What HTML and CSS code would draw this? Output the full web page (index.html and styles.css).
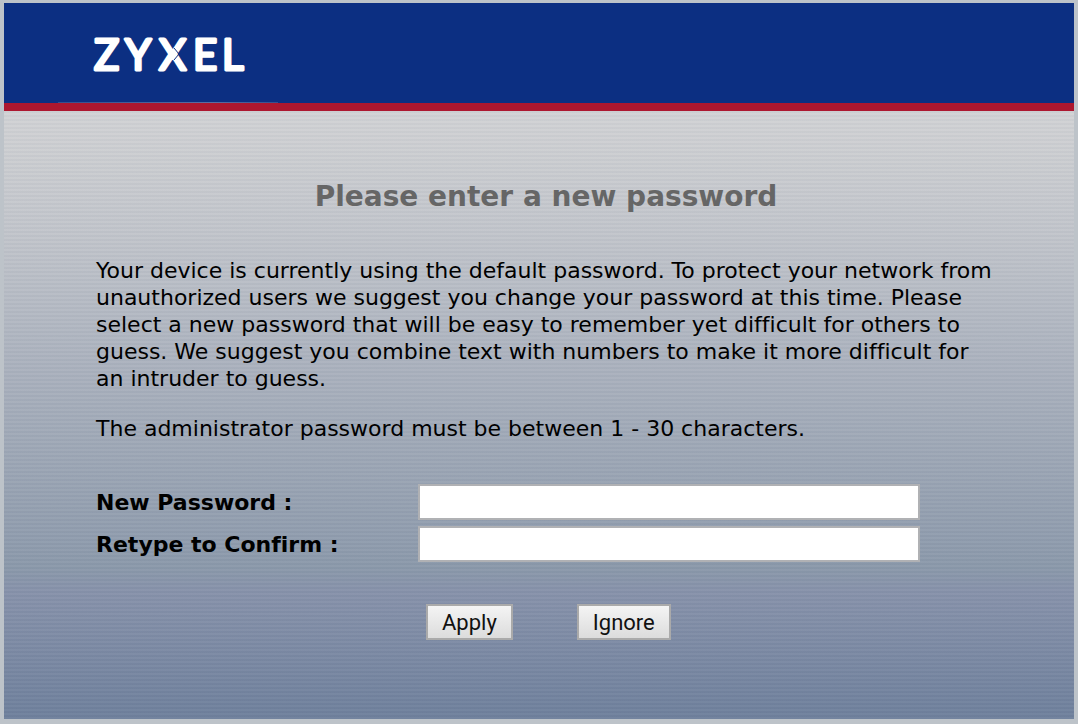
FILE: index.html
```html
<!DOCTYPE html>
<html lang="en">
<head>
<meta charset="utf-8">
<meta name="viewport" content="width=device-width, initial-scale=1">
<title>ZYXEL - New password</title>
<link rel="stylesheet" href="styles.css">
</head>
<body>
<div class="panel">
  <header class="banner">
    <svg class="logo" width="200" height="64" viewBox="0 0 200 64" role="img" aria-label="ZYXEL">
      <text class="logo-text" x="2 33 67 101 130" y="47">ZYXEL</text>
      <path class="logo-cut" d="M82 25L87 31L82 37"/>
    </svg>
  </header>
  <main class="content">
    <h1 class="title">Please enter a new password</h1>
    <p class="text">Your device is currently using the default password. To protect your network from<br>unauthorized users we suggest you change your password at this time. Please<br>select a new password that will be easy to remember yet difficult for others to<br>guess. We suggest you combine text with numbers to make it more difficult for<br>an intruder to guess.</p>
    <p class="text">The administrator password must be between 1 - 30 characters.</p>
    <form class="form">
      <label class="label" for="new-password">New Password :</label>
      <input class="field" id="new-password" type="password">
      <label class="label" for="confirm">Retype to Confirm :</label>
      <input class="field" id="confirm" type="password">
      <div class="actions">
        <button class="button" type="submit">Apply</button>
        <button class="button" type="button">Ignore</button>
      </div>
    </form>
  </main>
</div>
</body>
</html>
```
FILE: styles.css
```css
* { box-sizing: border-box; }

body {
  margin: 0;
  min-height: 100vh;
  display: flex;
  padding: 3px 4px 5px;
  background: #bdc3c9;
  font-family: Verdana, "DejaVu Sans", sans-serif;
  font-size: 22px;
  font-variant-ligatures: none;
  color: #000;
}

.panel {
  flex: 1;
  display: flex;
  flex-direction: column;
}

.banner {
  height: 108px;
  padding: 20px 0 0 88px;
  background:
    linear-gradient(90deg, #33508f, #5a6fa3 70%, #33508f) 54px 100% / 220px 1px no-repeat padding-box,
    #0c2f82;
  border-bottom: 8px solid #ad172f;
}

.logo { display: block; }

.logo-text {
  font-family: Lato, sans-serif;
  font-size: 42px;
  font-weight: 400;
  fill: #fff;
  stroke: #fff;
  stroke-width: 3;
  stroke-linejoin: round;
}

.logo-cut {
  fill: none;
  stroke: #0c2f82;
  stroke-width: 1;
}

.content {
  flex: 1;
  padding: 68px 64px 32px 92px;
  background:
    repeating-linear-gradient(rgba(40, 60, 90, 0.03) 0 2px, rgba(255, 255, 255, 0.03) 2px 4px),
    linear-gradient(#d2d3d5 0%, #c2c5cb 20%, #aab1bd 43%, #919dae 70%, #8b99aa 75%, #8792aa 79%, #6f809c 100%);
}

.title {
  margin: 0 14px 42px 0;
  font-size: 28px;
  line-height: 36px;
  text-align: center;
  color: #666;
}

.text {
  margin: 0 0 23px;
  line-height: 27px;
  white-space: nowrap;
}

.form {
  display: grid;
  grid-template-columns: 322px minmax(0, 502px);
  row-gap: 6px;
  align-items: center;
  margin-top: 42px;
}

.label { font-weight: 700; }

.field {
  width: 100%;
  height: 36px;
  padding: 4px 8px;
  border: 2px solid #b0b1b4;
  background: #fff;
  font: inherit;
}

.actions {
  grid-column: 2;
  display: flex;
  gap: 64px;
  margin: 36px 0 0 8px;
}

.button {
  height: 36px;
  padding: 0 14px;
  border: 2px solid #aaa;
  background: linear-gradient(#f4f4f4, #dcdcdc);
  font-family: Roboto, sans-serif;
  font-size: 22px;
  color: #111;
}
```
